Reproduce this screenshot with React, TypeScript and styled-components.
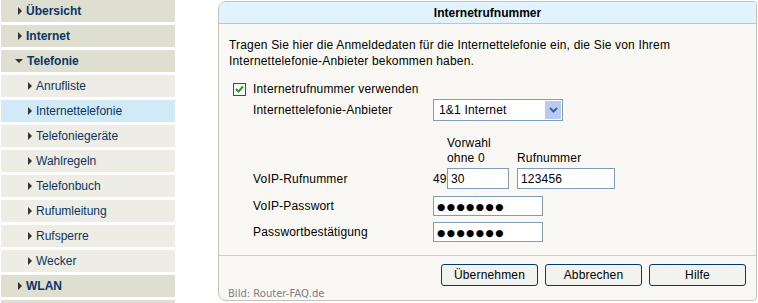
import * as React from 'react';
import styled, { createGlobalStyle } from 'styled-components';

const GlobalStyle = createGlobalStyle`
    html, body {
        margin: 0;
        padding: 0;
        background: #ffffff;
        font-family: "Liberation Sans", Arial, sans-serif;
        font-size: 12px;
    }
`;

const Page = styled.div`
    display: flex;
    align-items: flex-start;
    width: 758px;
    height: 303px;
    overflow: hidden;
`;

// Sidebar
const Sidebar = styled.nav`
    width: 174px;
    padding-left: 1px;
    display: flex;
    flex-direction: column;
    gap: 3px;
`;

const NavItem = styled.div<{ level: number; active?: boolean }>`
    height: 22px;
    display: flex;
    align-items: center;
    padding-left: ${p => (p.level === 0 ? 17 : 27)}px;
    background: ${p => (p.active ? '#d2e9f8' : p.level === 0 ? '#dfdfd1' : '#edece5')};
    color: #0c3463;
    font-weight: ${p => (p.level === 0 ? 'bold' : 'normal')};
    font-size: 12px;
`;

const ArrowRight = styled.span`
    width: 0;
    height: 0;
    border-top: 4px solid transparent;
    border-bottom: 4px solid transparent;
    border-left: 4px solid #333;
    margin-right: 4px;
`;

const ArrowDown = styled.span`
    width: 0;
    height: 0;
    border-left: 4px solid transparent;
    border-right: 4px solid transparent;
    border-top: 4px solid #333;
    margin-left: -3px;
    margin-right: 4px;
`;

// Panel
const Panel = styled.section`
    position: relative;
    margin-left: 43px;
    margin-top: 1px;
    width: 537px;
    height: 298px;
    border: 1px solid #c5c3b8;
    border-radius: 8px 4px 4px 8px;
    background: #f9f8f4;
    display: flex;
    flex-direction: column;
    overflow: hidden;
`;

const PanelHeader = styled.header`
    height: 21px;
    background: #e0f3fe;
    border-bottom: 1px solid #c5c3b8;
    display: flex;
    align-items: center;
    justify-content: center;
    font-weight: bold;
    color: #000;
`;

const PanelBody = styled.div`
    flex: 1;
    padding: 13px 10px 0 10px;
    color: #000;
    letter-spacing: 0.18px;
`;

const Intro = styled.p`
    margin: 0;
    line-height: 16px;
`;

const CheckRow = styled.label`
    display: flex;
    align-items: center;
    height: 14px;
    margin-top: 13px;
    margin-left: 4px;
    gap: 7px;
`;

const CheckBox = styled.span`
    width: 11px;
    height: 11px;
    border: 1px solid #1c5180;
    background: #fff;
    display: flex;
    align-items: center;
    justify-content: center;
`;

const FormRow = styled.div<{ top: number; h: number }>`
    display: flex;
    align-items: center;
    height: ${p => p.h}px;
    margin-top: ${p => p.top}px;
    padding-left: 24px;
`;

const Label = styled.span`
    width: 180px;
    flex-shrink: 0;
`;

const Select = styled.div`
    width: 123px;
    height: 20px;
    border: 1px solid #7f9db9;
    background: #fff;
    display: flex;
    align-items: center;
    justify-content: space-between;
    padding-left: 5px;
    box-sizing: content-box;
`;

const SelectButton = styled.span`
    width: 16px;
    height: 18px;
    margin-right: 1px;
    background: #b8cbf6;
    display: flex;
    align-items: center;
    justify-content: center;
`;

const HeadRow = styled.div`
    display: flex;
    align-items: flex-end;
    height: 31px;
    margin-top: 14px;
    padding-left: 218px;
    line-height: 15px;
`;

const HeadCell = styled.span<{ w: number }>`
    width: ${p => p.w}px;
`;

const Prefix = styled.span`
    width: 14px;
`;

const Spacer = styled.span`
    width: 8px;
`;

const Field = styled.input<{ w: number; h: number }>`
    width: ${p => p.w}px;
    height: ${p => p.h}px;
    box-sizing: border-box;
    border: 1px solid #7f9db9;
    background: #fff;
    font-family: "Liberation Sans", Arial, sans-serif;
    font-size: 12px;
    letter-spacing: 0.18px;
    padding: 0 3px;
    margin: 0;
    outline: none;
    color: #000;
`;

const Dots = styled.input<{ w: number }>`
    width: ${p => p.w}px;
    height: 20px;
    box-sizing: border-box;
    border: 1px solid #7f9db9;
    background: #fff;
    font-family: "DejaVu Sans", sans-serif;
    font-size: 9.5px;
    letter-spacing: 1.4px;
    padding: 0 3px;
    margin: 0;
    outline: none;
    color: #000;
`;

const Footer = styled.footer`
    height: 36px;
    border-top: 1px solid #cfcdc4;
    display: flex;
    justify-content: flex-end;
    align-items: flex-start;
    padding: 8px 10px 0 0;
    gap: 7px;
`;

const Button = styled.button`
    width: 97px;
    height: 22px;
    border: 1px solid #003c74;
    border-radius: 3px;
    background: #f2f2ee;
    font-family: "Liberation Sans", Arial, sans-serif;
    font-size: 12px;
    letter-spacing: 0.18px;
    color: #000;
    padding: 0;
`;

const Watermark = styled.span`
    position: absolute;
    left: 9px;
    bottom: 1px;
    font-family: "DejaVu Sans", sans-serif;
    font-size: 10px;
    color: #7d7d7d;
`;

const nav: { label: string; level: number; open?: boolean; active?: boolean }[] = [
    { label: 'Übersicht', level: 0 },
    { label: 'Internet', level: 0 },
    { label: 'Telefonie', level: 0, open: true },
    { label: 'Anrufliste', level: 1 },
    { label: 'Internettelefonie', level: 1, active: true },
    { label: 'Telefoniegeräte', level: 1 },
    { label: 'Wahlregeln', level: 1 },
    { label: 'Telefonbuch', level: 1 },
    { label: 'Rufumleitung', level: 1 },
    { label: 'Rufsperre', level: 1 },
    { label: 'Wecker', level: 1 },
    { label: 'WLAN', level: 0 },
    { label: '', level: 0 },
];

export default function App() {
    return (
        <Page>
            <GlobalStyle />
            <Sidebar>
                {nav.map((n, i) =>
                    <NavItem key={i} level={n.level} active={n.active}>
                        {n.label && (n.open ? <ArrowDown /> : <ArrowRight />)}
                        {n.label}
                    </NavItem>
                )}
            </Sidebar>
            <Panel>
                <PanelHeader>Internetrufnummer</PanelHeader>
                <PanelBody>
                    <Intro>
                        Tragen Sie hier die Anmeldedaten für die Internettelefonie ein, die Sie von Ihrem<br />
                        Internettelefonie-Anbieter bekommen haben.
                    </Intro>
                    <CheckRow>
                        <CheckBox>
                            <svg width="9" height="9" viewBox="0 0 9 9">
                                <path d="M1 4 L3.5 6.5 L8 1.5" stroke="#21a121" strokeWidth="2" fill="none" />
                            </svg>
                        </CheckBox>
                        Internetrufnummer verwenden
                    </CheckRow>
                    <FormRow top={3} h={22}>
                        <Label>Internettelefonie-Anbieter</Label>
                        <Select>
                            1&amp;1 Internet
                            <SelectButton>
                                <svg width="9" height="6" viewBox="0 0 9 6">
                                    <path d="M1 1 L4.5 4.5 L8 1" stroke="#4d6185" strokeWidth="2" fill="none" />
                                </svg>
                            </SelectButton>
                        </Select>
                    </FormRow>
                    <HeadRow>
                        <HeadCell w={70}>Vorwahl<br />ohne 0</HeadCell>
                        <HeadCell w={100}>Rufnummer</HeadCell>
                    </HeadRow>
                    <FormRow top={2} h={21}>
                        <Label>VoIP-Rufnummer</Label>
                        <Prefix>49</Prefix>
                        <Field w={62} h={21} readOnly value="30" />
                        <Spacer />
                        <Field w={98} h={21} readOnly value="123456" />
                    </FormRow>
                    <FormRow top={7} h={20}>
                        <Label>VoIP-Passwort</Label>
                        <Dots w={110} readOnly value="●●●●●●●" />
                    </FormRow>
                    <FormRow top={6} h={20}>
                        <Label>Passwortbestätigung</Label>
                        <Dots w={110} readOnly value="●●●●●●●" />
                    </FormRow>
                </PanelBody>
                <Footer>
                    <Button>Übernehmen</Button>
                    <Button>Abbrechen</Button>
                    <Button>Hilfe</Button>
                </Footer>
                <Watermark>Bild: Router-FAQ.de</Watermark>
            </Panel>
        </Page>
    );
}
